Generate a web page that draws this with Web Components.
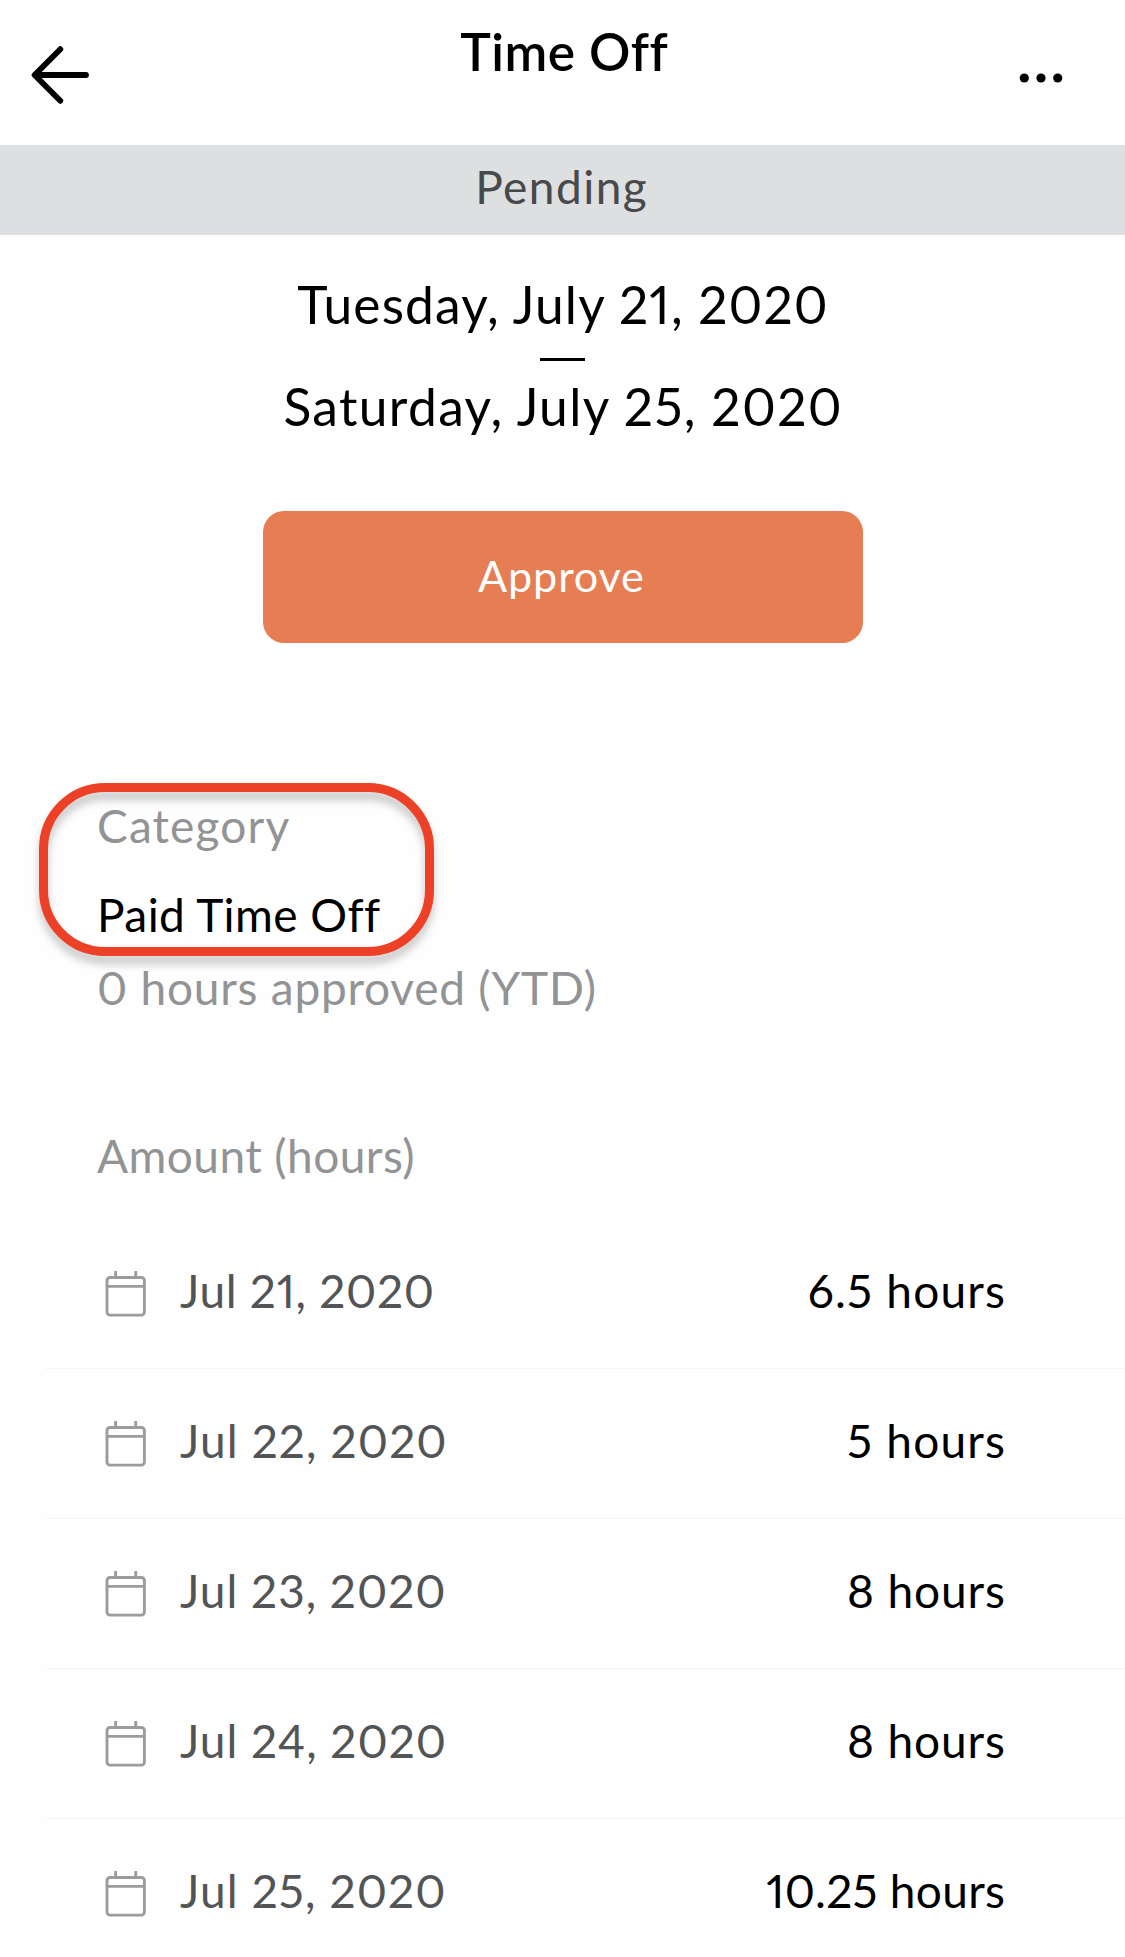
<!DOCTYPE html>
<html lang="en">
<head>
<meta charset="utf-8">
<title>Time Off</title>
<style>
  html, body { margin: 0; padding: 0; background: #fefefe; }
  body { font-family: Lato, "Liberation Sans", sans-serif; color: #000; }
</style>
</head>
<body>
<time-off-page></time-off-page>
<script>
const define = (name, html) => {
  const template = document.createElement('template');
  template.innerHTML = html;
  customElements.define(name, class extends HTMLElement {
    constructor() {
      super();
      this.attachShadow({ mode: 'open' }).append(template.content.cloneNode(true));
    }
  });
};

/* One line of text; --size, --track and --line set its type. */
define('text-line', `
  <style>
    :host { display: block; font-size: var(--size, 46px); line-height: var(--line, 54px); white-space: nowrap;
            letter-spacing: var(--track, 1px); font-feature-settings: "pnum"; }
    span { display: inline-block; margin-right: calc(-1 * var(--track, 1px)); }
  </style><span><slot></slot></span>`);

define('icon-back', `
  <style>:host { display: block; width: 60px; height: 60px } svg { display: block }</style>
  <svg width="60" height="60" viewBox="0 0 60 60" fill="none" stroke="#000" stroke-width="5.8" stroke-linecap="round" stroke-linejoin="round">
    <path d="M56 30H5M30.3 4.2L4.6 30l25.7 25.8"/>
  </svg>`);

define('icon-more', `
  <style>:host { display: block; width: 48px; height: 12px } svg { display: block }</style>
  <svg width="48" height="12" viewBox="0 0 48 12"><circle cx="7.3" cy="6" r="4.6"/><circle cx="24" cy="6" r="4.6"/><circle cx="40.7" cy="6" r="4.6"/></svg>`);

define('icon-calendar', `
  <style>:host { display: block; width: 42px; height: 48px } svg { display: block }</style>
  <svg width="42" height="48" viewBox="0 0 42 48" fill="none" stroke="#9b9c9e" stroke-width="2.9">
    <rect x="3" y="7.5" width="37.4" height="37.6" rx="3"/><path d="M3 16.4h37.4M11.6 1v6.3M31.7 1v6.3"/>
  </svg>`);

define('nav-bar', `
  <style>
    :host { display: grid; grid-template-columns: 1fr auto 1fr; align-items: start; height: 145px; box-sizing: border-box; }
    icon-back { margin: 45px 0 0 30px; }
    icon-more { margin: 72px 60px 0 0; justify-self: end; }
    text-line { --size: 51.5px; --track: .55px; --line: 103px; font-weight: 600; padding-left: 3px; }
  </style>
  <icon-back></icon-back><text-line><slot></slot></text-line><icon-more></icon-more>`);

define('status-banner', `
  <style>
    :host { display: flex; justify-content: center; height: 90px; background: #dedfe1; color: #48494b; }
    text-line { --track: 1.45px; --line: 84px; padding-right: 3px; }
  </style>
  <text-line><slot></slot></text-line>`);

define('date-range', `
  <style>
    :host { display: flex; flex-direction: column; align-items: center; padding-top: 41px; --size: 51.5px; --line: 56px; }
    i { width: 45px; height: 3px; background: #000; margin: 26px 0 17px; }
  </style>
  <slot name="from"></slot><i></i><slot name="to"></slot>`);

define('action-button', `
  <style>
    :host { display: block; }
    button { display: flex; justify-content: center; align-items: flex-start; width: 600px; height: 132px; border: 0; margin: 0;
             padding: 36px 3px 0 0; box-sizing: border-box; border-radius: 21px; background: #e77d52; color: #fff; font: inherit; }
    text-line { --size: 43.2px; --track: .85px; --line: 56px; }
  </style>
  <button><text-line><slot></slot></text-line></button>`);

define('category-field', `
  <style>
    :host { display: block; position: relative; padding-left: 97px; color: #929395; }
    .value { color: #000; margin: 35px 0 19px; }
    .mark { position: absolute; left: 38.5px; top: -16.3px; width: 395px; height: 173px; box-sizing: border-box;
            border: 9.3px solid #ec4127; border-radius: 66px; filter: drop-shadow(0 8px 4px rgba(0,0,0,.22)); }
  </style>
  <div class="mark"></div>
  <slot name="label"></slot><div class="value"><slot name="value"></slot></div><slot name="note"></slot>`);

define('hours-row', `
  <style>
    :host { display: flex; height: 150px; box-sizing: border-box; margin-left: 45px; padding: 0 120px 0 59px;
            border-bottom: 1px solid #f5f5f6; }
    icon-calendar { margin: 51px 34px 0 0; }
    .date { color: #535456; flex: 1; padding-top: 45px; }
    .amount { padding-top: 45px; }
  </style>
  <icon-calendar></icon-calendar>
  <div class="date"><slot name="date"></slot></div>
  <div class="amount"><slot></slot></div>`);

define('time-off-page', `
  <style>
    :host { display: flex; flex-direction: column; height: 1957px; overflow: hidden; }
    :host > *, nav-bar, status-banner, date-range, action-button, category-field, hours-row, .section { flex-shrink: 0; }
    action-button { align-self: center; margin: 77px 0 156px; }
    .section { color: #929395; padding-left: 97px; margin: 114px 0 36px; }
    hours-row:last-of-type { border: 0; }
  </style>
  <nav-bar>Time Off</nav-bar>
  <status-banner>Pending</status-banner>
  <date-range>
    <text-line slot="from" style="--track:1.17px">Tuesday, July 21, 2020</text-line>
    <text-line slot="to" style="--track:1.37px">Saturday, July 25, 2020</text-line>
  </date-range>
  <action-button>Approve</action-button>
  <category-field>
    <text-line slot="label" style="--track:1.15px">Category</text-line>
    <text-line slot="value" style="--track:.44px">Paid Time Off</text-line>
    <text-line slot="note" style="--track:.76px">0 hours approved (YTD)</text-line>
  </category-field>
  <text-line class="section" style="--track:.45px">Amount (hours)</text-line>
  <hours-row><text-line slot="date" style="--track:.7px">Jul 21, 2020</text-line><text-line style="--track:1.2px">6.5 hours</text-line></hours-row>
  <hours-row><text-line slot="date" style="--track:1.14px">Jul 22, 2020</text-line><text-line style="--track:1.2px">5 hours</text-line></hours-row>
  <hours-row><text-line slot="date">Jul 23, 2020</text-line><text-line style="--track:.9px">8 hours</text-line></hours-row>
  <hours-row><text-line slot="date">Jul 24, 2020</text-line><text-line style="--track:.9px">8 hours</text-line></hours-row>
  <hours-row><text-line slot="date" style="--track:1.14px">Jul 25, 2020</text-line><text-line style="--track:.3px">10.25 hours</text-line></hours-row>`);
</script>
</body>
</html>
